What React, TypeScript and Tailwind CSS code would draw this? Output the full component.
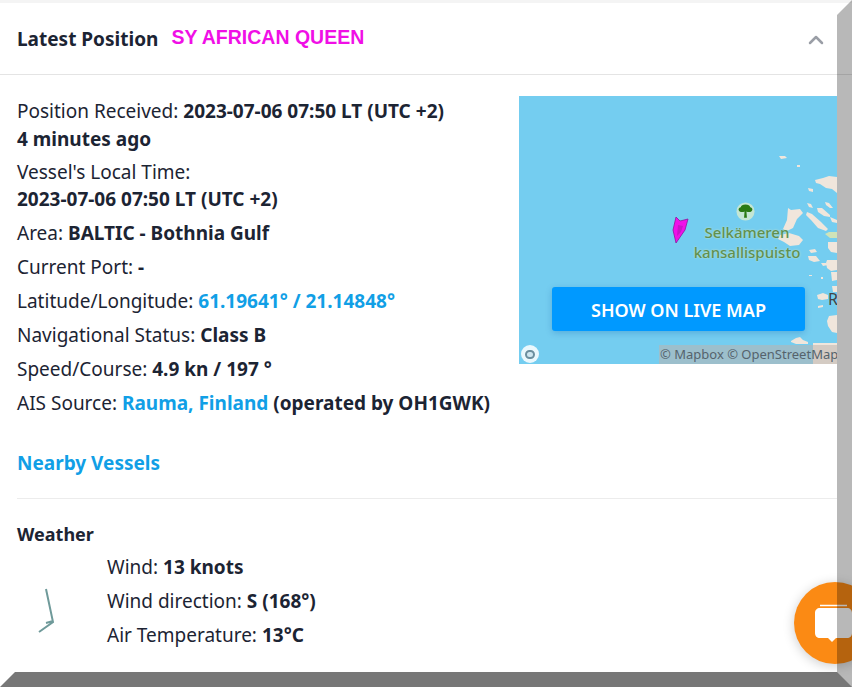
import { ChevronUp } from "lucide-react";

function MapIslands() {
  return (
    <svg viewBox="0 0 78 268" className="absolute right-0 top-0 h-[268px] w-[78px] blur-[0.5px]">
      <g fill="#f0e6dc">
        <path d="M20 60l6 0 2 2-6 1zM38 69l3 0 0 2-3 0z" />
        <path d="M56 84l8-2 6-2 8 1 0 16-5-4-6-1-6-4-4-1z" />
        <path d="M49 92l5 1 0 3-4-1zM48 107l4 1 2 4-4-1z" />
        <path d="M58 112l5 0 8 7 0 2-6-1-6-4zM66 106l4 1 4 5-3 0-4-3z" />
        <path d="M48 116l5 2 9 8 7 7-2 2-8-3-7-8-5-5z" />
        <path d="M71 121l7 3 0 3-5-1z" />
        <path d="M29 112l3 2 9-1 3 4-6 6-4 9-6 3-4-2 4-9z" />
        <path d="M21 139l9-2 10 3 4 4-4 5-9 1-6-4-6-3z" />
        <path d="M69 146l9 0 0 11-6-1-3-4zM50 154l6-1 2 3-6 1zM49 160l8 0 4 5-6 1-5-2zM62 167l5 0 2 2-5 1z" />
        <path d="M68 164l10 0 0 10-6 1-4-3-1-5z" />
        <path d="M58 199l6-2 5 2 0 4-6 1-4-1zM59 210l5-1 0 2-5 1zM50 179l3 0 0 1-3 0zM62 181l2 0 0 2-2 0zM72 176l6 0 0 8-5 1z" />
        <path d="M70 220l8-1 0 18-5-1-4-6-1-5zM73 190l5 0 0 6-4 0z" />
        <path d="M32 245l5-3 4-1 3 3 5 2 0 2-12 0-5-2z" />
        <path d="M54 247l24 0 0 21-24 0z" />
      </g>
      <path d="M66 138l4-2 8 0 0 6-7 0z" fill="#cfe3b8" />
    </svg>
  );
}

function MapPreview() {
  return (
    <div className="relative -mt-px h-[268px] w-[318px] shrink-0 overflow-hidden bg-[#74cdf0]">
      <MapIslands />
      <svg viewBox="0 0 18 28" className="absolute left-[154px] top-[121px] h-[28px] w-[18px] overflow-visible">
        <path d="M3 0l4 4 8-2-3 11-9 13-3-13z" fill="#f010e8" stroke="#8a1a9a" strokeWidth="0.8" />
        <path d="M5 8l5 1-2 6-4 4z" fill="#c814c8" />
      </svg>
      <svg viewBox="0 0 20 20" className="absolute left-[217px] top-[106px] h-[19px] w-[19px]">
        <circle cx="10" cy="10" r="9.500" fill="#c4e6d4" />
        <path d="M10 2.500c3 0 4.500 1 5 3 2.500.5 3 3 1 4.500-1.500 1-4 .5-5 0l.5 6.500h-3l.5-6.500c-1 .5-3.500 1-5 0-2-1.500-1.500-4 1-4.500.5-2 2-3 5-3z" fill="#2a7a14" />
      </svg>
      <div className="absolute left-[162px] top-[126px] w-[132px] text-center text-[15px] font-medium leading-[20px] text-[#5f9050] [text-shadow:0_0_2px_#d4e8c4]">
        Selkämeren
        <br />
        kansallispuisto
      </div>
      <span className="absolute left-[309px] top-[191px] text-[16px] leading-6 text-[#444]">R</span>
      <button className="absolute left-[33px] top-[191px] flex h-[44px] w-[253px] items-center justify-center rounded-[3px] bg-[#0099ff] pt-[2px] text-[18px] font-semibold text-white shadow-[0_2px_6px_rgba(0,80,160,0.25)]">
        SHOW ON LIVE MAP
      </button>
      <div className="absolute bottom-[1px] left-[2px] flex h-[18px] w-[18px] items-center justify-center rounded-full bg-white/85">
        <div className="h-[9px] w-[10px] rounded-full border-[2px] border-[#6b8e9e] bg-[#cfe6f0]" />
      </div>
      <div className="absolute bottom-0 right-0 flex h-[19px] w-[178px] items-center whitespace-nowrap bg-[rgba(190,180,175,0.55)] pl-[1px] text-[13px] text-[#55636c]">
        © Mapbox © OpenStreetMap
      </div>
    </div>
  );
}

function InfoLine({ children }: { children: React.ReactNode }) {
  return <p className="leading-[24px]">{children}</p>;
}

export default function App() {
  return (
    <div className="relative h-[687px] w-[852px] overflow-hidden bg-white font-['Noto_Sans',sans-serif] text-[19px] text-[#1c2433]">
      <div className="h-[3px] bg-[#f4f4f4]" />

      <div className="flex h-[72px] items-center border-b border-[#e4e4e4] pl-[17px] pt-[2px]">
        <h2 className="text-[19px] font-bold">Latest Position</h2>
        <span className="ml-[13px] -mt-[3px] font-['Liberation_Sans',sans-serif] text-[19.500px] font-bold text-[#f00fe6]">
          SY AFRICAN QUEEN
        </span>
        <ChevronUp className="absolute left-[804px] top-[28px] h-6 w-6 text-[#9a9ea6]" strokeWidth={2.5} />
      </div>

      <div className="flex pl-[17px] pt-[22px]">
        <div className="flex w-[502px] shrink-0 flex-col">
          <div>
            <p className="leading-[28px]">
              Position Received: <b className="font-bold">2023-07-06 07:50 LT (UTC +2)</b>
            </p>
            <p className="font-bold leading-[28px]">4 minutes ago</p>
          </div>
          <div className="mt-[5px]">
            <p className="leading-[28px]">Vessel's Local Time:</p>
            <p className="font-bold leading-[26px]">2023-07-06 07:50 LT (UTC +2)</p>
          </div>
          <div className="mt-[9px] flex flex-col gap-[10px]">
            <InfoLine>Area: <b className="font-bold">BALTIC - Bothnia Gulf</b></InfoLine>
            <InfoLine>Current Port: <b className="font-bold">-</b></InfoLine>
            <InfoLine>Latitude/Longitude: <a className="font-bold text-[#119fe6]">61.19641° / 21.14848°</a></InfoLine>
            <InfoLine>Navigational Status: <b className="font-bold">Class B</b></InfoLine>
            <InfoLine>Speed/Course: <b className="font-bold">4.9 kn / 197 °</b></InfoLine>
            <InfoLine>AIS Source: <a className="font-bold text-[#119fe6]">Rauma, Finland</a> <b className="font-bold">(operated by OH1GWK)</b></InfoLine>
          </div>
        </div>
        <MapPreview />
      </div>

      <div className="ml-[17px] mr-[15px] mt-[34px] border-b border-[#ececec] pb-[20px]">
        <a className="font-bold leading-[26px] text-[#119fe6]">Nearby Vessels</a>
      </div>

      <div className="pl-[17px] pt-[21px]">
        <h3 className="text-[18px] font-bold leading-[28px]">Weather</h3>
        <div className="flex pt-[7px]">
          <div className="flex w-[90px] shrink-0 items-start pl-[20px] pt-[33px]">
            <svg viewBox="0 0 20 50" className="h-[50px] w-[20px]" fill="none" stroke="#6f9a9a" strokeWidth="2">
              <path d="M9 1l7 33-14 10M16 33l-7 2" />
            </svg>
          </div>
          <div className="flex flex-col gap-[10px]">
            <InfoLine>Wind: <b className="font-bold">13 knots</b></InfoLine>
            <InfoLine>Wind direction: <b className="font-bold">S (168°)</b></InfoLine>
            <InfoLine>Air Temperature: <b className="font-bold">13°C</b></InfoLine>
          </div>
        </div>
      </div>

      {/* chat launcher sits under the bevel so the frame tints it */}
      <div className="absolute left-[794px] top-[582px] flex h-[82px] w-[82px] items-center justify-center rounded-full bg-[#fb8a14] shadow-[0_2px_12px_rgba(0,0,0,0.2)]">
        <svg viewBox="0 0 44 40" className="h-[40px] w-[44px]">
          <path d="M7 2.500h27" stroke="white" strokeWidth="1.500" fill="none" />
          <path d="M7 5h27c3 0 5 2 5 5v20c0 3-2 5-5 5H23l-4 4-4-4H7c-3 0-5-2-5-5V10c0-3 2-5 5-5z" fill="white" />
        </svg>
      </div>

      {/* picture frame: bevelled corners come from the border mitres */}
      <div className="pointer-events-none absolute inset-0 border-[15px] border-b-[rgba(0,0,0,0.53)] border-l-transparent border-r-[rgba(0,0,0,0.28)] border-t-transparent" />
    </div>
  );
}
